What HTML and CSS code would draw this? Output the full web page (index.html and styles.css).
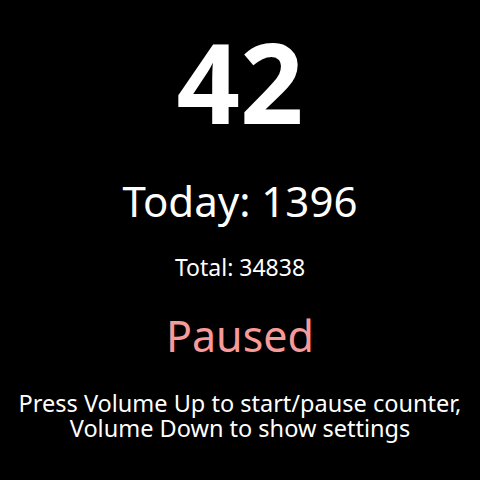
FILE: index.html
```html
<!DOCTYPE html>
<html>
<head><link rel="stylesheet" href="styles.css"></head>
<body>
<div class="screen">
  <div class="count">42</div>
  <div class="today">Today: 1396</div>
  <div class="total">Total: 34838</div>
  <div class="status">Paused</div>
  <div class="help">
    <div class="help-line">Press Volume Up to start/pause counter,</div>
    <div class="help-line">Volume Down to show settings</div>
  </div>
</div>
</body>
</html>
```
FILE: styles.css
```css
html, body { margin: 0; padding: 0; background: #000; }
.screen {
  width: 480px; height: 480px;
  display: flex; flex-direction: column; align-items: center;
  color: #fff;
  font-family: "Noto Sans", sans-serif;
  text-align: center;
}
.count { font-size: 111px; font-weight: 700; line-height: 112px; margin-top: 25px; }
.today { font-size: 42px; line-height: 42px; margin-top: 43px; }
.total { font-size: 23px; line-height: 23px; margin-top: 34px; }
.status { font-size: 43px; line-height: 43px; margin-top: 35px; color: #f79a9a; }
.help { font-size: 23.5px; line-height: 24.5px; margin-top: 34px; white-space: nowrap; }
.help-line { display: block; }
```
